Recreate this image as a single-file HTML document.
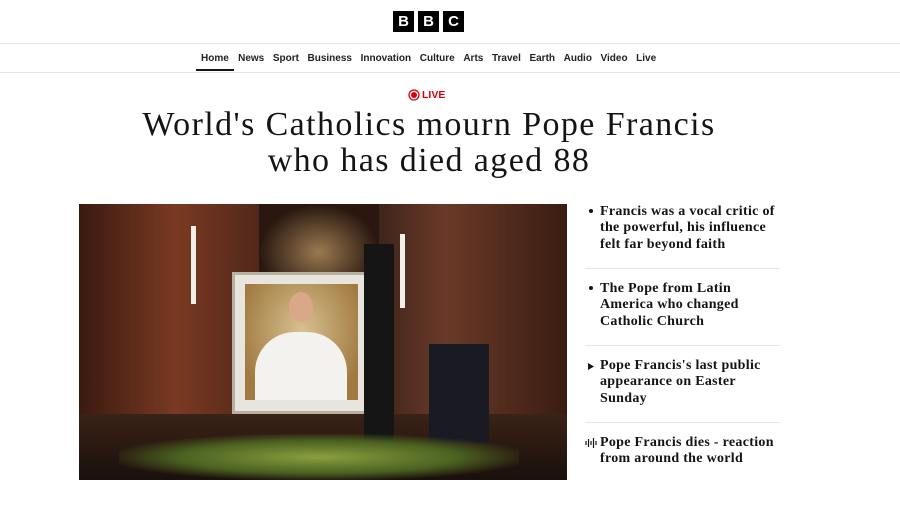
<!DOCTYPE html>
<html><head><meta charset="utf-8"><style>
*{margin:0;padding:0;box-sizing:border-box}
body{width:900px;height:507px;background:#fff;font-family:"Liberation Sans",sans-serif;position:relative;overflow:hidden;color:#141414}
.logo{position:absolute;top:11px;left:393px;display:flex;gap:4px}
.logo span{width:21px;height:21px;background:#000;color:#fff;font-weight:bold;font-size:15px;display:flex;align-items:center;justify-content:center}
.hr{position:absolute;left:0;right:0;height:1px;background:#e6e6e6}
.nav{position:absolute;top:53px;left:196px;font-size:10px;font-weight:bold;display:flex;color:#222}
.nav span{padding:0 4.3px;height:18px}
.nav .h{border-bottom:2px solid #141414;padding:0 5px}
.live{position:absolute;top:89px;left:408px;color:#d4000d;font-weight:bold;font-size:10.5px;display:flex;align-items:center;gap:2px}
h1{position:absolute;top:107px;left:0;width:858px;text-align:center;font-family:"Liberation Serif",serif;font-weight:normal;font-size:34px;line-height:36px;letter-spacing:1.4px;color:#141414}
.img{position:absolute;left:79px;top:204px;width:488px;height:276px;overflow:hidden;background:linear-gradient(90deg,#3a1a10 0%,#7a3a22 20%,#4a2418 40%,#2a1a14 55%,#6a3a28 75%,#3a1c12 100%)}
.side{position:absolute;left:585px;top:203px;width:195px;font-family:"Liberation Serif",serif;font-weight:bold;font-size:14px;line-height:16.3px;letter-spacing:0.3px;color:#141414}
.it{position:relative;padding-left:15px;border-bottom:1px solid #e6e6e6}
.it:last-child{border:none}
.b{position:absolute;left:4px;top:6px;width:4px;height:4px;border-radius:50%;background:#141414}
</style></head><body>
<div class="logo"><span>B</span><span>B</span><span>C</span></div>
<div class="hr" style="top:43px"></div>
<div class="nav"><span class="h">Home</span><span>News</span><span>Sport</span><span>Business</span><span>Innovation</span><span>Culture</span><span>Arts</span><span>Travel</span><span>Earth</span><span>Audio</span><span>Video</span><span>Live</span></div>
<div class="hr" style="top:72px"></div>
<div class="live"><svg width="12" height="12" viewBox="0 0 12 12"><circle cx="6" cy="6" r="5" fill="none" stroke="#d4000d" stroke-width="1.3"/><circle cx="6" cy="6" r="3" fill="#d4000d"/></svg>LIVE</div>
<h1>World's Catholics mourn Pope Francis<br>who has died aged 88</h1>
<div class="img">
<div style="position:absolute;left:180px;top:0;width:120px;height:80px;background:radial-gradient(ellipse at 50% 60%,#9a7a50,#2a1810 70%)"></div>
<div style="position:absolute;left:0;top:210px;width:488px;height:66px;background:linear-gradient(#3a2216,#1a100c)"></div>
<div style="position:absolute;left:153px;top:68px;width:139px;height:142px;background:#e8e4de;border:3px solid #b8b0a0"></div>
<div style="position:absolute;left:166px;top:80px;width:113px;height:116px;background:radial-gradient(ellipse at 50% 40%,#d8c090,#a07a40 80%)"></div>
<div style="position:absolute;left:176px;top:128px;width:92px;height:68px;background:#f4f2ee;border-radius:40px 40px 0 0"></div>
<div style="position:absolute;left:210px;top:88px;width:24px;height:30px;background:#d9a888;border-radius:50%"></div>
<div style="position:absolute;left:285px;top:40px;width:30px;height:200px;background:#151515"></div>
<div style="position:absolute;left:350px;top:140px;width:60px;height:100px;background:#1a1a22"></div>
<div style="position:absolute;left:112px;top:22px;width:5px;height:78px;background:#f2efe8"></div>
<div style="position:absolute;left:321px;top:30px;width:5px;height:74px;background:#f2efe8"></div>
<div style="position:absolute;left:40px;top:230px;width:400px;height:46px;background:radial-gradient(ellipse,#8aa040 0%,#4a6020 50%,transparent 75%)"></div>
</div>
<div class="side">
<div class="it" style="height:66px;padding-top:1px"><i class="b"></i>Francis was a vocal critic of the powerful, his influence felt far beyond faith</div>
<div class="it" style="height:77px;padding-top:12px"><i class="b" style="top:17px"></i>The Pope from Latin America who changed Catholic Church</div>
<div class="it" style="height:77px;padding-top:12px"><svg style="position:absolute;left:2px;top:17px" width="7" height="7" viewBox="0 0 7 7"><path d="M1 0L7 3.5L1 7Z" fill="#141414"/></svg>Pope Francis's last public appearance on Easter Sunday</div>
<div class="it" style="padding-top:12px"><svg style="position:absolute;left:0;top:15px" width="12" height="10" viewBox="0 0 12 10"><path d="M1 3v4M3.5 1v8M6 3v4M8.5 0v10M11 3v4" stroke="#141414" stroke-width="1.2"/></svg>Pope Francis dies - reaction from around the world</div>
</div>
</body></html>
